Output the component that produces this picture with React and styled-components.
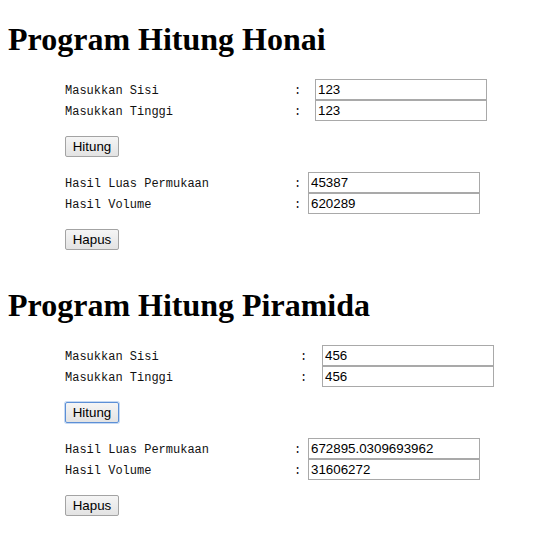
import React from "react";
import styled, { createGlobalStyle } from "styled-components";

const Global = createGlobalStyle`
  html, body { margin: 0; padding: 0; background: #fff; color: #000; }
  body { font-family: "Liberation Serif", "Times New Roman", serif; }
`;

const Page = styled.div`
  padding: 8px;
`;

const Section = styled.section`
  display: flex;
  flex-direction: column;
  margin-top: ${(p) => p.$top}px;
`;

const Title = styled.h1`
  margin: 0;
  font-family: "Liberation Serif", "Times New Roman", serif;
  font-weight: bold;
  font-size: 32px;
  line-height: 37px;
`;

const Block = styled.div`
  display: flex;
  flex-direction: column;
  align-items: flex-start;
  gap: 15px;
  padding-left: 57px;
  margin-top: 21px;
`;

const Table = styled.div`
  display: grid;
  grid-template-columns: ${(p) => p.$label}px ${(p) => p.$colon}px 172px;
  grid-auto-rows: 21px;
  align-items: center;
`;

const Label = styled.span`
  font-family: "Liberation Mono", "Courier New", monospace;
  font-size: 12px;
  line-height: 14px;
  padding-top: 2px;
  color: #111;
  white-space: pre;
`;

const Colon = styled(Label)``;

const Input = styled.input`
  box-sizing: border-box;
  width: 172px;
  height: 21px;
  margin: 0;
  padding: 1px 2px;
  border: 1px solid #a9a9a9;
  font-family: "Liberation Sans", Arial, sans-serif;
  font-size: 13.33px;
  color: #000;
  background: #fff;
  outline: none;
`;

const Button = styled.button`
  box-sizing: border-box;
  width: 54px;
  height: 21px;
  margin: 0;
  padding: 0 6px;
  border: 1px solid ${(p) => (p.$focused ? "#5c8fd6" : "#a3a3a3")};
  border-radius: 2px;
  background: linear-gradient(#f5f5f5, #e3e3e3);
  box-shadow: ${(p) => (p.$focused ? "0 0 0 1px #c5d9f3" : "none")};
  font-family: "Liberation Sans", Arial, sans-serif;
  font-size: 13.33px;
  color: #000;
  line-height: 19px;
  cursor: default;
`;

function FieldTable({ label, colon, rows }) {
  return (
    <Table $label={label} $colon={colon}>
      {rows.map(([l, v]) => (
        <React.Fragment key={l}>
          <Label>{l}</Label>
          <Colon>:</Colon>
          <Input defaultValue={v} />
        </React.Fragment>
      ))}
    </Table>
  );
}

function Calculator({ title, top, inputCols, resultCols, inputs, results, focused }) {
  return (
    <Section $top={top}>
      <Title>{title}</Title>
      <Block>
        <FieldTable label={inputCols[0]} colon={inputCols[1]} rows={inputs} />
        <Button $focused={focused}>Hitung</Button>
        <FieldTable label={resultCols[0]} colon={resultCols[1]} rows={results} />
        <Button>Hapus</Button>
      </Block>
    </Section>
  );
}

export default function App() {
  return (
    <Page>
      <Global />
      <Calculator
        title="Program Hitung Honai"
        top={13}
        inputCols={[229, 21]}
        resultCols={[229, 14]}
        inputs={[
          ["Masukkan Sisi", "123"],
          ["Masukkan Tinggi", "123"],
        ]}
        results={[
          ["Hasil Luas Permukaan", "45387"],
          ["Hasil Volume", "620289"],
        ]}
      />
      <Calculator
        title="Program Hitung Piramida"
        top={37}
        inputCols={[235, 22]}
        resultCols={[229, 14]}
        inputs={[
          ["Masukkan Sisi", "456"],
          ["Masukkan Tinggi", "456"],
        ]}
        results={[
          ["Hasil Luas Permukaan", "672895.0309693962"],
          ["Hasil Volume", "31606272"],
        ]}
        focused
      />
    </Page>
  );
}
